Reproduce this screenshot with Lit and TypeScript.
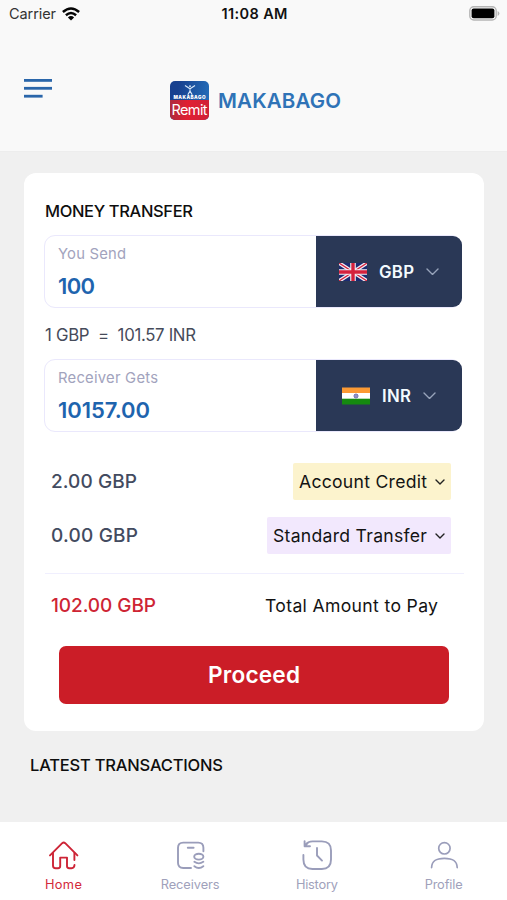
import { LitElement, html, css, svg } from "lit";
import { customElement, property } from "lit/decorators.js";

/* Single line of text whose tracking is adjusted to fill a given measure. */
@customElement("fit-text")
class FitText extends LitElement {
  @property() text = "";
  @property({ type: Number }) measure = 0;
  static styles = css`
    :host { display: block; white-space: pre; }
    span { display: inline-block; }
  `;
  render() {
    return html`<span>${this.text}</span>`;
  }
  updated() {
    const span = this.renderRoot.querySelector("span") as HTMLElement;
    span.style.letterSpacing = "0px";
    const natural = span.getBoundingClientRect().width;
    const gap = (this.measure - natural) / Math.max(1, this.text.length - 1);
    span.style.letterSpacing = `${gap.toFixed(3)}px`;
    this.style.width = `${this.measure}px`;
  }
}

const ukFlag = svg`
  <svg class="flag" viewBox="0 0 28 18">
    <rect width="28" height="18" fill="#1c2b72"/>
    <path d="M0 0L28 18M28 0L0 18" stroke="#f3eef4" stroke-width="3.8"/>
    <path d="M0 0L28 18M28 0L0 18" stroke="#d5213c" stroke-width="1.3"/>
    <path d="M14 0V18M0 9H28" stroke="#f3eef4" stroke-width="5.6"/>
    <path d="M14 0V18M0 9H28" stroke="#d5213c" stroke-width="3.4"/>
  </svg>`;

const indiaFlag = svg`
  <svg class="flag" viewBox="0 0 28 18">
    <rect width="28" height="6" y="0.5" fill="#fb9a34"/>
    <rect width="28" height="6" y="6" fill="#fff"/>
    <rect width="28" height="5.8" y="11.7" fill="#158a10"/>
    <circle cx="14" cy="9" r="2" fill="#c3c3e4" stroke="#56569f" stroke-width="0.9"/>
    <circle cx="14" cy="9" r="0.7" fill="#3a3a8c"/>
  </svg>`;

const navIcons: Record<string, unknown> = {
  Home: svg`<svg class="ico" viewBox="0 0 32 32">
    <path d="M3 16.4L15.2 4.2Q16.7 2.8 18.2 4.2L30.4 16.4"/>
    <path d="M6 14V26.4Q6 29.2 8.7 29.2H11Q13.2 29.2 13.2 27V18.6H20V27Q20 29.2 22.2 29.2H24.6Q27.3 29.2 27.5 26M27.4 14V21"/>
  </svg>`,
  Receivers: svg`<svg class="ico" viewBox="0 0 32 32">
    <path d="M17 29H9.2Q4 29 4 23.8V8.8Q4 3.6 9.2 3.6H24.2Q29.4 3.6 29.4 8.8V12.3"/>
    <path d="M13.8 8.8H19.6"/>
    <ellipse cx="24.8" cy="17.7" rx="4.6" ry="2.9"/>
    <path d="M20.4 22.8Q24.8 26 29.3 22.8M20.4 27.2Q24.8 30.8 29.3 27.2"/>
  </svg>`,
  History: svg`<svg class="ico" viewBox="0 0 32 32">
    <path d="M2.4 16V20.5Q2.4 30 11.4 30H20.8Q30 30 30 20.5V11.5Q30 2.4 20.8 2.4H11.6Q7 2.4 4 6.2"/>
    <path d="M3.6 2.2V7.3H9M3.8 6.8L6.5 4.4"/>
    <path d="M16 9V16.5L21 21.6"/>
  </svg>`,
  Profile: svg`<svg class="ico thin" viewBox="0 0 32 32">
    <circle cx="16.4" cy="9.3" r="5.7"/>
    <path d="M3.6 28.6C3.8 21.5 8.2 19.3 16.4 19.3S29 21.5 29.2 28.6"/>
  </svg>`,
};

const tabs = [
  { name: "Home", width: 37, active: true },
  { name: "Receivers", width: 59, active: false },
  { name: "History", width: 42, active: false },
  { name: "Profile", width: 38, active: false },
];

@customElement("app-root")
class AppRoot extends LitElement {
  static styles = css`
    :host {
      display: flex;
      flex-direction: column;
      width: 507px;
      height: 900px;
      overflow: hidden;
      background: #f0f0f0;
      color: #131313;
      font-family: Inter, "Liberation Sans", sans-serif;
    }
    * { box-sizing: border-box; }
    svg { display: block; flex: none; }

    .top { height: 152px; flex: none; background: #f9f9f9; border-bottom: 1px solid #ededed; }
    .status {
      display: grid;
      grid-template-columns: 1fr auto 1fr;
      align-items: center;
      height: 27px;
      padding: 0 7px 0 9px;
      font-size: 14.5px;
      line-height: 20px;
    }
    .carrier { display: flex; align-items: center; gap: 6px; color: #333; }
    .time { font-weight: 600; color: #111; }
    .battery { justify-self: end; }
    .bar { display: flex; align-items: flex-start; padding: 51px 0 0 24px; }
    .brand { display: flex; align-items: center; gap: 8px; margin: 3px 0 0 118px; }
    .tile {
      width: 39px; height: 39px; border-radius: 5px; overflow: hidden;
      display: flex; flex-direction: column; align-items: center;
      background: linear-gradient(100deg, #17408f 20%, #2672bd);
      color: #fff;
    }
    .tile svg { margin-top: 3px; }
    .tile .mini { font-size: 4.6px; font-weight: 900; line-height: 5px; height: 5px; }
    .tile .base {
      display: flex; justify-content: center;
      width: 39px; height: 20px;
      background: linear-gradient(90deg, #ad2b3e, #e11f32 45%, #cf2136);
    }
    .tile .remit { font-size: 14.5px; line-height: 18px; padding-top: 1px; }
    .name { font-size: 20.5px; font-weight: 600; line-height: 39px; color: #2f73b7; padding-left: 1px; }

    .card {
      flex: none;
      width: 460px; height: 558px;
      margin: 21px 0 0 24px;
      padding: 26px 20px 0 20px;
      border-radius: 12px;
      background: #fff;
    }
    h2 { margin: 0; font-size: 16.5px; font-weight: 500; line-height: 24px; color: #0e0e0e; }
    .card h2 { padding-left: 1px; }
    .field {
      display: flex;
      width: 418px; height: 73px;
      border: 1.5px solid #eae8fc;
      border-radius: 11px;
      background: #fff;
    }
    .field.send { margin-top: 12px; }
    .entry { flex: 1; padding: 7px 0 0 13px; }
    .caption { font-size: 14.8px; line-height: 22px; color: #a2a3bd; }
    .amount { font-size: 22px; line-height: 30px; margin-top: 6px; font-weight: 600; color: #1e64ae; }
    .pick {
      display: flex; align-items: center; justify-content: center;
      width: 146px; height: 71px;
      margin: 0 -1px 0 0;
      border-radius: 0 9px 9px 0;
      background: #2a3856;
      color: #f4fbff;
      font-size: 16.8px; font-weight: 600; line-height: 24px;
      gap: 12px;
    }
    .flag { width: 28px; height: 18px; }
    .rate { padding: 14px 0 0 1px; height: 51px; font-size: 16.8px; line-height: 26px; color: #464b5a; }

    .row { display: flex; align-items: center; justify-content: space-between; height: 37px; padding: 0 13px 0 7px; }
    .row.fee { margin-top: 31px; }
    .row.speed { margin-top: 17px; }
    .value { font-size: 19px; font-weight: 500; line-height: 26px; color: #434b60; }
    .chip {
      display: flex; align-items: center; justify-content: space-between;
      height: 37px; padding: 1px 6px 0 6px; border-radius: 2px;
      font-size: 17.6px; line-height: 26px;
    }
    .chip.credit { width: 158px; background: #fcf3cd; }
    .chip.standard { width: 184px; background: #f2e8fd; }
    .row.total { margin: 19px 0 0 1px; padding: 11px 26px 0 6px; height: 53px; width: 419px; border-top: 1.5px solid #f0effe; font-size: 17.6px; }
    .total .value { color: #ce2434; }
    .proceed {
      display: flex; align-items: center; justify-content: center;
      width: 390px; height: 58px;
      margin: 20px 0 0 15px; padding: 0;
      border: 0; border-radius: 7px;
      background: #cb1d27; color: #fff;
      font: 600 22.6px/32px Inter, sans-serif;
    }
    .latest { flex: 1; padding: 22px 0 0 30px; }

    nav {
      display: grid; grid-template-columns: repeat(4, 1fr);
      flex: none; height: 78px; background: #fff;
      padding-top: 17px;
    }
    .tab { display: flex; flex-direction: column; align-items: center; gap: 6px; color: #a0a1bb; font-size: 12.8px; line-height: 16px; }
    .tab.active { color: #d3293a; }
    .ico { width: 32px; height: 32px; fill: none; stroke: #9a9dba; stroke-width: 1.9; stroke-linecap: round; stroke-linejoin: round; }
    .active .ico { stroke: #cd2436; }
    .ico.thin { stroke-width: 1.7; }
  `;

  private chevron(color: string, w: number, h: number, weight: number) {
    return html`<svg width=${w} height=${h} viewBox="0 0 ${w} ${h}" fill="none" stroke=${color}
      stroke-width=${weight} stroke-linecap="round" stroke-linejoin="round">
      <path d="M1 1L${w / 2} ${h - 1}L${w - 1} 1"/></svg>`;
  }

  private field(cls: string, caption: string, cw: number, amount: string, aw: number, code: string, codeW: number, flag: unknown) {
    return html`<div class="field ${cls}">
      <div class="entry">
        <fit-text class="caption" text=${caption} measure=${cw}></fit-text>
        <fit-text class="amount" text=${amount} measure=${aw}></fit-text>
      </div>
      <div class="pick">
        ${flag}
        <fit-text text=${code} measure=${codeW}></fit-text>
        ${this.chevron("#98a4ba", 13, 7.5, 1.4)}
      </div>
    </div>`;
  }

  render() {
    return html`
      <header class="top">
        <div class="status">
          <div class="carrier">
            <fit-text text="Carrier" measure="47"></fit-text>
            <svg width="18" height="14" viewBox="0 0 18 14" fill="none" stroke="#050505" stroke-width="2.5">
              <path d="M0.9 5Q9 -2 17.1 5M3.9 8.2Q9 3.8 14.1 8.2"/>
              <path d="M9 13.6L5.9 10.4Q9 7.8 12.1 10.4Z" fill="#050505" stroke="none"/>
            </svg>
          </div>
          <fit-text class="time" text="11:08 AM" measure="66"></fit-text>
          <svg class="battery" width="31" height="15" viewBox="0 0 31 15">
            <rect x="0.8" y="0.8" width="26.4" height="13.2" rx="4" fill="#f9f9f9" stroke="#b5b5b5" stroke-width="1.4"/>
            <rect x="2.6" y="2.6" width="22.8" height="9.6" rx="2" fill="#000"/>
            <path d="M28.6 5V10Q30.4 9.2 30.4 7.5T28.6 5Z" fill="#b5b5b5"/>
          </svg>
        </div>
        <div class="bar">
          <svg width="28" height="20" viewBox="0 0 28 20" fill="#2a66aa">
            <rect y="1" width="28" height="2.8"/><rect y="8.9" width="28" height="2.8"/><rect y="16.8" width="18.6" height="2.8"/>
          </svg>
          <div class="brand">
            <div class="tile">
              <svg width="12" height="11" viewBox="0 0 12 11" fill="none" stroke="#d5e6f8" stroke-width="1.2">
                <circle cx="6" cy="2.2" r="0.9" fill="#d5e6f8" stroke="none"/>
                <path d="M1 1.5L6 4.8L11 1.5M6 4.5V7L3.8 10.8M6 7L8.2 10.8"/>
              </svg>
              <fit-text class="mini" text="MAKABAGO" measure="32"></fit-text>
              <div class="base"><fit-text class="remit" text="Remit" measure="36"></fit-text></div>
            </div>
            <fit-text class="name" text="MAKABAGO" measure="123"></fit-text>
          </div>
        </div>
      </header>

      <main class="card">
        <h2><fit-text text="MONEY TRANSFER" measure="148"></fit-text></h2>
        ${this.field("send", "You Send", 68, "100", 37, "GBP", 35, ukFlag)}
        <fit-text class="rate" text="1 GBP  =  101.57 INR" measure="151"></fit-text>
        ${this.field("", "Receiver Gets", 100, "10157.00", 92, "INR", 29, indiaFlag)}
        <div class="row fee">
          <fit-text class="value" text="2.00 GBP" measure="86"></fit-text>
          <div class="chip credit">
            <fit-text text="Account Credit" measure="128"></fit-text>
            ${this.chevron("#222", 10, 6, 1.4)}
          </div>
        </div>
        <div class="row speed">
          <fit-text class="value" text="0.00 GBP" measure="87"></fit-text>
          <div class="chip standard">
            <fit-text text="Standard Transfer" measure="154"></fit-text>
            ${this.chevron("#222", 10, 6, 1.4)}
          </div>
        </div>
        <div class="row total">
          <fit-text class="value" text="102.00 GBP" measure="105"></fit-text>
          <fit-text text="Total Amount to Pay" measure="173"></fit-text>
        </div>
        <button class="proceed"><fit-text text="Proceed" measure="92"></fit-text></button>
      </main>

      <section class="latest">
        <h2><fit-text text="LATEST TRANSACTIONS" measure="193"></fit-text></h2>
      </section>

      <nav>
        ${tabs.map(
          (t) => html`<div class="tab ${t.active ? "active" : ""}">
            ${navIcons[t.name]}
            <fit-text text=${t.name} measure=${t.width}></fit-text>
          </div>`
        )}
      </nav>
    `;
  }
}
